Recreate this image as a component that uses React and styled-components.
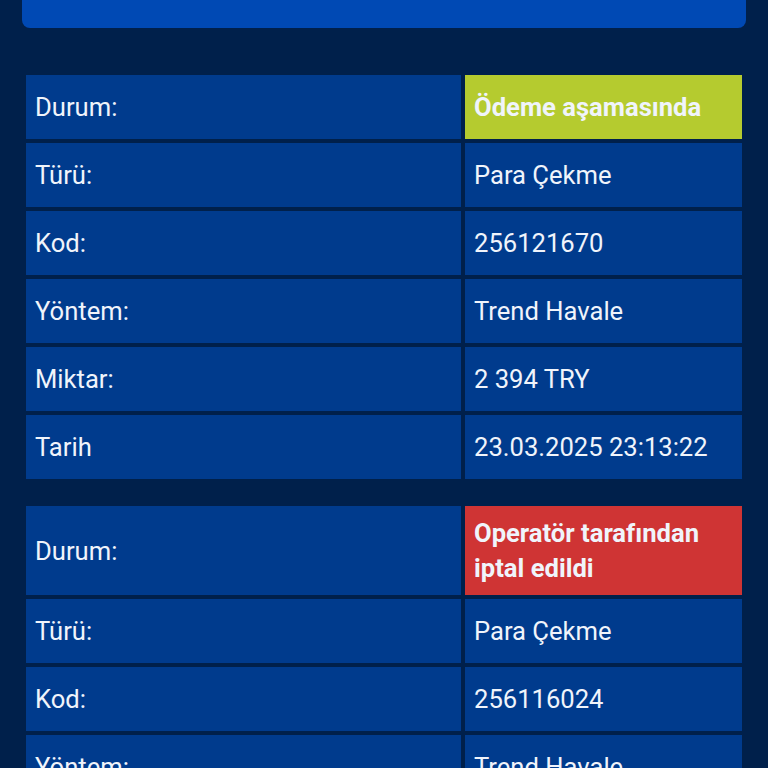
import React from 'react';
import styled, {createGlobalStyle} from 'styled-components';

const GlobalStyle = createGlobalStyle`
  html, body {
    margin: 0;
    padding: 0;
    background: #00204b;
    font-family: Roboto, "Noto Sans", "Liberation Sans", sans-serif;
    overflow: hidden;
  }
`;

const Page = styled.div`
  padding: 0 22px;
  min-height: 768px;
`;

const TopCard = styled.div`
  height: 28px;
  background: #0049b4;
  border-radius: 0 0 8px 8px;
  margin-bottom: 43px;
`;

const Table = styled.table`
  width: 100%;
  border-spacing: 4px;
  border-collapse: separate;
  margin: 0 0 19px;
`;

const Cell = styled.td`
  height: 64px;
  box-sizing: border-box;
  padding: 10px 9px 9px;
  background: ${p => p.$status === 'pending' ? '#b5cb2f' : p.$status === 'cancelled' ? '#cf3434' : '#003b8d'};
  color: #f0f4fb;
  font-size: 25.6px;
  font-weight: ${p => p.$status ? 700 : 400};
  line-height: 35px;
  vertical-align: middle;
  width: ${p => p.$label ? '435px' : 'auto'};
`;

const transactions = [
  {
    status: 'pending',
    statusText: 'Ödeme aşamasında',
    rows: [
      ['Türü:', 'Para Çekme'],
      ['Kod:', '256121670'],
      ['Yöntem:', 'Trend Havale'],
      ['Miktar:', '2 394 TRY'],
      ['Tarih', '23.03.2025 23:13:22'],
    ],
  },
  {
    status: 'cancelled',
    statusText: 'Operatör tarafından iptal edildi',
    rows: [
      ['Türü:', 'Para Çekme'],
      ['Kod:', '256116024'],
      ['Yöntem:', 'Trend Havale'],
      ['Miktar:', '2 394 TRY'],
      ['Tarih', '23.03.2025 21:40:10'],
    ],
  },
];

const Transaction = ({item}) => (
  <Table>
    <tbody>
      <tr>
        <Cell $label>Durum:</Cell>
        <Cell $status={item.status}>{item.statusText}</Cell>
      </tr>
      {item.rows.map(([label, value]) => (
        <tr key={label}>
          <Cell $label>{label}</Cell>
          <Cell>{value}</Cell>
        </tr>
      ))}
    </tbody>
  </Table>
);

export default function App() {
  return (
    <>
      <GlobalStyle />
      <Page>
        <TopCard />
        {transactions.map((t, i) => <Transaction key={i} item={t} />)}
      </Page>
    </>
  );
}
